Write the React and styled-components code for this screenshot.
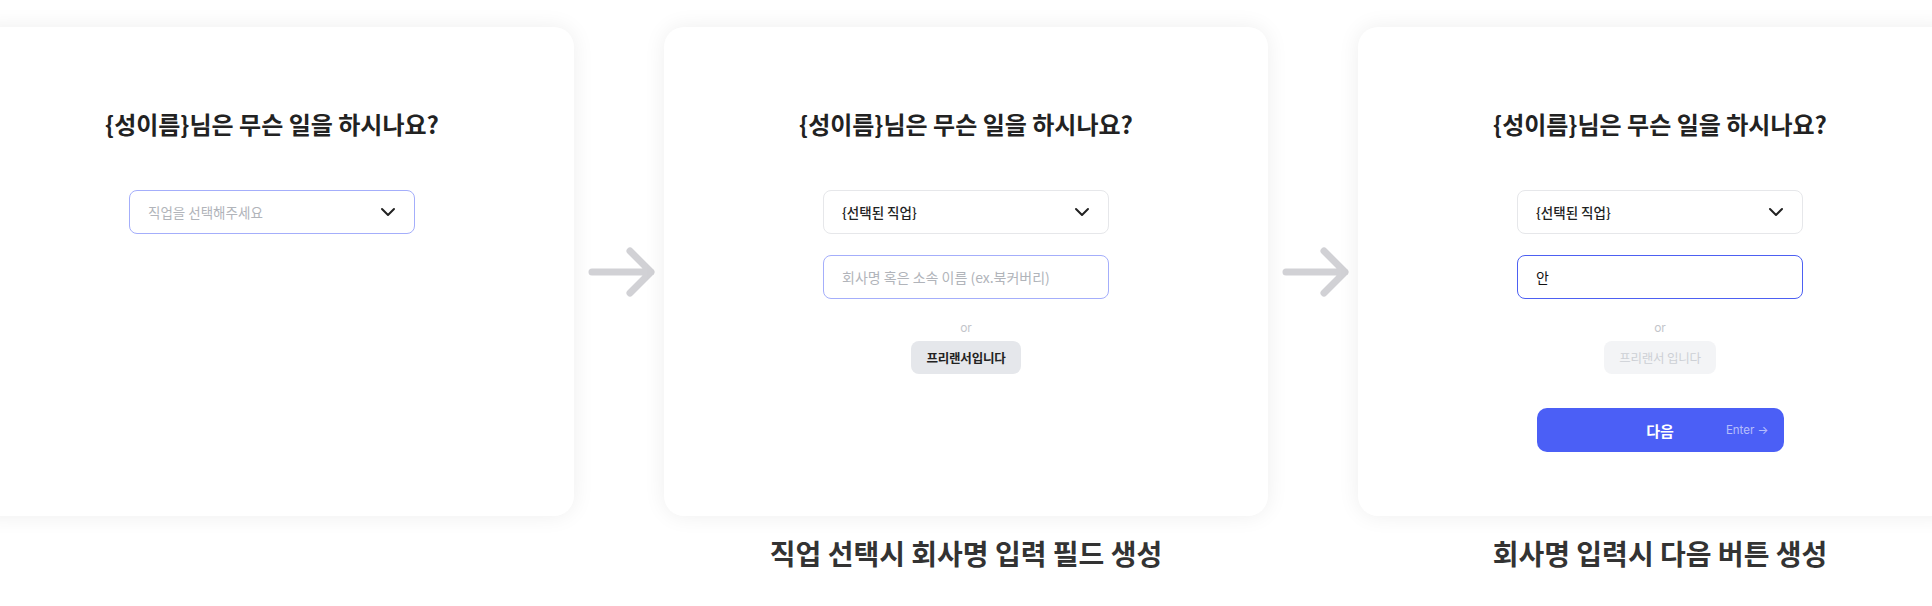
import styled, { createGlobalStyle } from "styled-components";
import { ChevronDown } from "lucide-react";

const GlobalStyle = createGlobalStyle`
    body {
        margin: 0;
        background: #fff;
        font-family: "Noto Sans CJK KR", "Noto Sans", sans-serif;
        overflow: hidden;
    }
`

const steps = [
    { id: 1, job: null, company: null },
    { id: 2, job: '{선택된 직업}', company: '', caption: '직업 선택시 회사명 입력 필드 생성' },
    { id: 3, job: '{선택된 직업}', company: '안', caption: '회사명 입력시 다음 버튼 생성' },
]

const Arrow = () => (
    <ArrowSlot>
        <svg width="70" height="56" viewBox="0 0 70 56" fill="none">
            <path d="M4 28H63M42 7L63 28L42 49" stroke="#d1d1d5" strokeWidth="7" strokeLinecap="round" strokeLinejoin="round" />
        </svg>
    </ArrowSlot>
)

const StepCard = ({ step }) => {
    const hasJob = step.job !== null
    const hasCompany = !!step.company
    return (
        <Column>
            <Card>
                <Title>{'{성이름}님은 무슨 일을 하시나요?'}</Title>
                <SelectBox $active={!hasJob}>
                    <SelectText $placeholder={!hasJob}>{hasJob ? step.job : '직업을 선택해주세요'}</SelectText>
                    <ChevronDown size={24} strokeWidth={2} color="#222" />
                </SelectBox>
                {hasJob &&
                    <>
                        <Field $focused={hasCompany}>
                            {hasCompany
                                ? <FieldValue>{step.company}</FieldValue>
                                : <FieldPlaceholder>회사명 혹은 소속 이름 (ex.북커버리)</FieldPlaceholder>}
                        </Field>
                        <Or>or</Or>
                        <FreelanceButton $disabled={hasCompany}>
                            {hasCompany ? '프리랜서 입니다' : '프리랜서입니다'}
                        </FreelanceButton>
                    </>
                }
                {hasCompany &&
                    <NextButton>
                        <span />
                        <NextLabel>다음</NextLabel>
                        <EnterHint>Enter →</EnterHint>
                    </NextButton>
                }
            </Card>
            {step.caption && <Caption>{step.caption}</Caption>}
        </Column>
    )
}

const App = () => {
    return (
        <>
            <GlobalStyle />
            <Page>
                <StepCard step={steps[0]} />
                <Arrow />
                <StepCard step={steps[1]} />
                <Arrow />
                <StepCard step={steps[2]} />
            </Page>
        </>
    );
}

const Page = styled.div`
    display: flex;
    justify-content: center;
    align-items: flex-start;
    padding-top: 27px;
    width: 100%;
`

const Column = styled.div`
    width: 604px;
    flex-shrink: 0;
    display: flex;
    flex-direction: column;
`

const ArrowSlot = styled.div`
    width: 90px;
    height: 489px;
    flex-shrink: 0;
    display: flex;
    align-items: center;
    justify-content: center;

    svg{
        margin-left: 8px;
    }
`

const Card = styled.div`
    height: 489px;
    box-sizing: border-box;
    padding-top: 80px;
    background: #fff;
    border-radius: 20px;
    box-shadow: 0 0 22px rgba(0, 0, 0, 0.07);
    display: flex;
    flex-direction: column;
    align-items: center;
`

const Title = styled.h2`
    margin: 0 0 49px;
    font-size: 24px;
    line-height: 34px;
    font-weight: 700;
    color: #222;
`

const SelectBox = styled.div`
    width: 286px;
    height: 44px;
    box-sizing: border-box;
    border: 1px solid ${p => p.$active ? '#a4aefb' : '#e6e7ea'};
    border-radius: 8px;
    padding: 0 14px 0 18px;
    display: flex;
    align-items: center;
    justify-content: space-between;
`

const SelectText = styled.span`
    font-size: 13.5px;
    font-weight: ${p => p.$placeholder ? 400 : 500};
    color: ${p => p.$placeholder ? '#b1b4ba' : '#222'};
`

const Field = styled.div`
    margin-top: 21px;
    width: 286px;
    height: 44px;
    box-sizing: border-box;
    border: 1px solid ${p => p.$focused ? '#4d60f2' : '#a4aefb'};
    border-radius: 8px;
    padding: 0 18px;
    display: flex;
    align-items: center;
`

const FieldPlaceholder = styled.span`
    font-size: 14px;
    color: #b1b4ba;
`

const FieldValue = styled.span`
    font-size: 14px;
    color: #111;
`

const Or = styled.div`
    margin-top: 19px;
    font-family: Inter, "Noto Sans", sans-serif;
    font-size: 12px;
    line-height: 20px;
    color: #c3c5ca;
`

const FreelanceButton = styled.div`
    margin-top: 3px;
    height: 33px;
    padding: 0 15px;
    border-radius: 8px;
    display: flex;
    align-items: center;
    font-size: 12.5px;
    letter-spacing: -0.2px;
    font-weight: ${p => p.$disabled ? 400 : 700};
    background: ${p => p.$disabled ? '#f3f4f6' : '#e5e7eb'};
    color: ${p => p.$disabled ? '#cdd0d5' : '#222'};
`

const NextButton = styled.div`
    margin-top: 34px;
    width: 247px;
    height: 44px;
    box-sizing: border-box;
    padding: 0 15px;
    border-radius: 10px;
    background: #4b5ff6;
    display: grid;
    grid-template-columns: 1fr auto 1fr;
    align-items: center;
`

const NextLabel = styled.span`
    font-size: 15px;
    font-weight: 700;
    color: #fff;
`

const EnterHint = styled.span`
    justify-self: end;
    font-family: Inter, "Noto Sans", sans-serif;
    font-size: 11.5px;
    color: rgba(255, 255, 255, 0.6);
`

const Caption = styled.div`
    margin-top: 17px;
    text-align: center;
    font-size: 28px;
    line-height: 40px;
    font-weight: 700;
    color: #333;
`

export default App;
